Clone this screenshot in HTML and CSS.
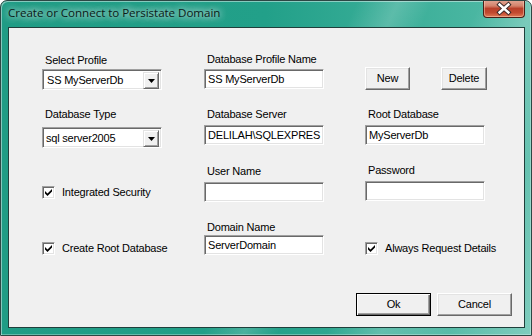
FILE: index.html
```html
<!DOCTYPE html>
<html>
<head>
<meta charset="utf-8">
<link rel="stylesheet" href="styles.css">
</head>
<body>
<div class="window">
  <div class="titlebar">
    <span class="title">Create or Connect to Persistate Domain</span>
    <div class="close">
      <svg width="42" height="17" viewBox="0 0 42 17">
        <path d="M17 4.5 L26 12.5 M26 4.5 L17 12.5" stroke="#3a2a28" stroke-width="4.6" stroke-linecap="square" fill="none"/>
        <path d="M17 4.5 L26 12.5 M26 4.5 L17 12.5" stroke="#ffffff" stroke-width="2.6" stroke-linecap="square" fill="none"/>
      </svg>
    </div>
  </div>
  <div class="frame">
    <div class="client">
      <div class="row">
        <div class="cell">
          <label class="lbl mt1">Select Profile</label>
          <div class="combo mt2"><span class="val">SS MyServerDb</span><span class="dd"><svg width="7" height="4" viewBox="0 0 7 4"><polygon points="0,0 7,0 3.5,4" fill="#000"/></svg></span></div>
        </div>
        <div class="cell">
          <label class="lbl">Database Profile Name</label>
          <div class="text mt3">SS MyServerDb</div>
        </div>
        <div class="cell btns mt14">
          <div class="btn w45">New</div>
          <div class="btn w46 ml31">Delete</div>
        </div>
      </div>
      <div class="row r2">
        <div class="cell">
          <label class="lbl">Database Type</label>
          <div class="combo mt6"><span class="val v2">sql server2005</span><span class="dd"><svg width="7" height="4" viewBox="0 0 7 4"><polygon points="0,0 7,0 3.5,4" fill="#000"/></svg></span></div>
        </div>
        <div class="cell">
          <label class="lbl">Database Server</label>
          <div class="text mt4">DELILAH\SQLEXPRES</div>
        </div>
        <div class="cell">
          <label class="lbl">Root Database</label>
          <div class="text mt4">MyServerDb</div>
        </div>
      </div>
      <div class="row r3">
        <div class="cell">
          <div class="check mt22"><span class="box"><svg width="7" height="7" viewBox="0 0 7 7"><path d="M0 2 L2.5 4.5 L7 0 L7 2.6 L2.5 7 L0 4.6 Z" fill="#000"/></svg></span><span>Integrated Security</span></div>
        </div>
        <div class="cell">
          <label class="lbl mt1">User Name</label>
          <div class="text mt4"></div>
        </div>
        <div class="cell">
          <label class="lbl">Password</label>
          <div class="text mt4"></div>
        </div>
      </div>
      <div class="row r4">
        <div class="cell">
          <div class="check mt21"><span class="box"><svg width="7" height="7" viewBox="0 0 7 7"><path d="M0 2 L2.5 4.5 L7 0 L7 2.6 L2.5 7 L0 4.6 Z" fill="#000"/></svg></span><span>Create Root Database</span></div>
        </div>
        <div class="cell">
          <label class="lbl">Domain Name</label>
          <div class="text mt1">ServerDomain</div>
        </div>
        <div class="cell">
          <div class="check mt21"><span class="box"><svg width="7" height="7" viewBox="0 0 7 7"><path d="M0 2 L2.5 4.5 L7 0 L7 2.6 L2.5 7 L0 4.6 Z" fill="#000"/></svg></span><span>Always Request Details</span></div>
        </div>
      </div>
      <div class="actions">
        <div class="btn default w75">Ok</div>
        <div class="btn w75">Cancel</div>
      </div>
    </div>
  </div>
</div>
</body>
</html>
```

FILE: styles.css
```css
html, body {
  margin: 0;
  padding: 0;
  background: #ffffff;
}
body {
  font-family: "Liberation Sans", Arial, sans-serif;
  font-size: 11px;
  letter-spacing: -0.2px;
  color: #000;
}
.window {
  width: 532px;
  height: 336px;
  box-sizing: border-box;
  display: flex;
  flex-direction: column;
  border-radius: 7px 7px 0 0;
  border: 1px solid #2c4744;
  background:
    linear-gradient(115deg, rgba(255,255,255,0) 52%, rgba(255,255,255,0.18) 58%, rgba(255,255,255,0) 63%, rgba(255,255,255,0) 70%, rgba(255,255,255,0.22) 78%, rgba(255,255,255,0.1) 88%, rgba(255,255,255,0.25) 100%),
    linear-gradient(90deg, #1f9c85 0%, #22a089 50%, #3aae98 75%, #55bca8 100%);
  box-shadow: inset 1px 1px 0 rgba(255,255,255,0.45), inset -1px -1px 0 rgba(255,255,255,0.3);
  overflow: hidden;
}
.titlebar {
  height: 26px;
  display: flex;
  align-items: flex-start;
  flex: none;
}
.title {
  font-family: "Open Sans", "Noto Sans", sans-serif;
  font-size: 11.6px;
  line-height: 16px;
  padding: 4px 0 0 7px;
  color: #0b1a18;
  text-shadow: 0 0 6px rgba(255,255,255,0.85), 0 0 10px rgba(255,255,255,0.6), 0 0 14px rgba(255,255,255,0.5);
  letter-spacing: -0.05px;
}
.close {
  margin-left: auto;
  margin-right: 6px;
  margin-top: -1px;
  width: 42px;
  height: 18px;
  box-sizing: border-box;
  border: 1px solid #4a1e16;
  border-top: none;
  border-radius: 0 0 4px 4px;
  background: linear-gradient(180deg, #e2a896 0%, #d4826b 35%, #b9402a 50%, #c24a30 75%, #e07a55 100%);
  box-shadow: inset 0 0 0 1px rgba(255,220,200,0.45);
  display: flex;
}
.close svg {
  margin-left: -1px;
  margin-top: -0.5px;
}
.frame {
  flex: 1;
  padding: 0 6px 7px 7px;
  display: flex;
}
.client {
  width: 517px;
  height: 301px;
  flex: none;
  box-sizing: border-box;
  border: 1px solid #1f3f3b;
  background: #f0f0f0;
  padding: 25px 12px 0 33px;
  display: flex;
  flex-direction: column;
}
.row {
  display: grid;
  grid-template-columns: 162px 161px 1fr;
  align-items: start;
}
.r2 { margin-top: 18px; }
.r3 { margin-top: 16px; }
.r4 { margin-top: 19px; }
.cell {
  display: flex;
  flex-direction: column;
  align-items: flex-start;
}
.btns {
  flex-direction: row;
}
.lbl {
  display: block;
  line-height: 13px;
  height: 13px;
  padding-left: 3px;
  white-space: nowrap;
}
.mt1 { margin-top: 1px; }
.mt2 { margin-top: 2px; }
.mt3 { margin-top: 3px; }
.mt4 { margin-top: 4px; }
.mt6 { margin-top: 6px; }
.mt14 { margin-top: 14px; }
.mt21 { margin-top: 21px; }
.mt22 { margin-top: 22px; }
.ml31 { margin-left: 31px; }

.text, .combo, .box {
  box-sizing: border-box;
  background: #fff;
  border: 1px solid;
  border-color: #a0a0a0 #ffffff #ffffff #a0a0a0;
  box-shadow: inset 1px 1px 0 #696969, inset -1px -1px 0 #e3e3e3;
}
.text {
  width: 120px;
  height: 20px;
  padding: 2px 2px 0 3px;
  line-height: 15px;
  white-space: nowrap;
  overflow: hidden;
}
.combo {
  width: 120px;
  height: 21px;
  display: flex;
  align-items: flex-start;
  padding: 2px;
}
.combo .val {
  flex: 1;
  line-height: 16px;
  padding-left: 2px;
  white-space: nowrap;
}
.combo .v2 {
  padding-left: 1px;
}
.dd {
  width: 16px;
  height: 17px;
  box-sizing: border-box;
  background: #f0f0f0;
  border: 1px solid;
  border-color: #e3e3e3 #696969 #696969 #e3e3e3;
  box-shadow: inset 1px 1px 0 #fff, inset -1px -1px 0 #a0a0a0;
  display: flex;
  align-items: center;
  justify-content: center;
}
.dd svg {
  display: block;
  margin-top: 1px;
}
.btn {
  height: 23px;
  box-sizing: border-box;
  background: #f0f0f0;
  border: 1px solid;
  border-color: #ffffff #696969 #696969 #ffffff;
  box-shadow: inset -1px -1px 0 #a0a0a0, inset 1px 1px 0 #e3e3e3;
  display: flex;
  align-items: center;
  justify-content: center;
  line-height: 13px;
}
.btn.default {
  border: 1px solid #000;
  box-shadow: inset 1px 1px 0 #fff, inset -1px -1px 0 #696969, inset -2px -2px 0 #a0a0a0;
}
.w45 { width: 45px; }
.w46 { width: 46px; }
.w75 { width: 75px; }
.check {
  display: flex;
  align-items: center;
  line-height: 13px;
  white-space: nowrap;
}
.box {
  width: 13px;
  height: 13px;
  margin-right: 7px;
  display: flex;
  align-items: center;
  justify-content: center;
  flex: none;
}
.box svg {
  display: block;
}
.actions {
  margin-top: 38px;
  display: flex;
  justify-content: flex-end;
  gap: 6px;
}
```
